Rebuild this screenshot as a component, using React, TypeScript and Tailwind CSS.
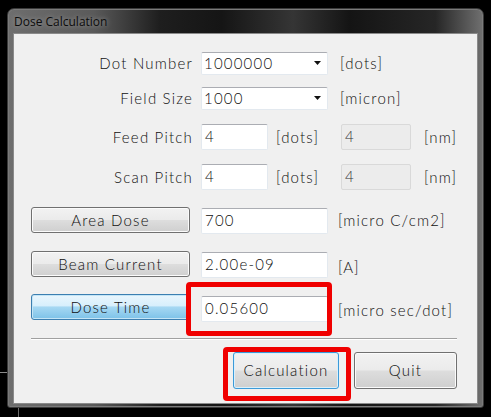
import React from 'react';

const font = { fontFamily: 'Lato, "Noto Sans", sans-serif' };

function Label({ children }: { children: React.ReactNode }) {
  return <div className="w-[170px] shrink-0 pr-[8px] text-right">{children}</div>;
}

function GrayButton({ children, className = '' }: { children: React.ReactNode; className?: string }) {
  return (
    <div
      className={`flex items-center justify-center rounded-[3px] border bg-[linear-gradient(to_bottom,#f2f2f2_0%,#ebebeb_48%,#dddddd_52%,#cfcfcf_100%)] ${className}`}
    >
      {children}
    </div>
  );
}

function ButtonCell({ children, blue = false }: { children: React.ReactNode; blue?: boolean }) {
  return (
    <div className="w-[170px] shrink-0">
      {blue ? (
        <div className="flex h-[26px] w-[159px] items-center justify-center rounded-[3px] border border-[#3c7fb1] bg-[linear-gradient(to_bottom,#eaf6fd_0%,#d7effc_45%,#a6d8f3_50%,#7dc2e8_100%)] shadow-[inset_0_0_0_1px_#c4e5f6]">
          {children}
        </div>
      ) : (
        <div className="flex h-[26px] w-[159px] items-center justify-center rounded-[3px] border border-[#707070] bg-[linear-gradient(to_bottom,#f2f2f2_0%,#ebebeb_48%,#dddddd_52%,#cfcfcf_100%)] shadow-[inset_0_0_0_1px_#fbfbfb]">
          {children}
        </div>
      )}
    </div>
  );
}

function TextBox({ value, w, disabled = false }: { value: string; w: string; disabled?: boolean }) {
  return (
    <div
      className={`flex h-[26px] items-center rounded-[2px] border px-[3px] pb-[2px] ${w} ${
        disabled
          ? 'border-[#d9d9d9] bg-[#ececec] text-[#333]'
          : 'border-[#e3e9ef] border-t-[#abadb3] bg-white'
      }`}
    >
      {value}
    </div>
  );
}

function Combo({ value }: { value: string }) {
  return (
    <div className="flex h-[23px] w-[127px] items-center justify-between rounded-[2px] border border-[#e3e9ef] border-t-[#abadb3] bg-white pb-[1px] pl-[2px] pr-[6px]">
      <span>{value}</span>
      <svg width="7" height="4" viewBox="0 0 7 4">
        <path d="M0 0h7L3.5 4z" fill="#111" />
      </svg>
    </div>
  );
}

export default function App() {
  return (
    <div className="relative h-[417px] w-[491px] overflow-hidden bg-black" style={font}>
      {/* stray desktop lines */}
      <div className="absolute left-0 top-[372px] h-px w-[7px] bg-[#8a8a8a]" />
      <div className="absolute left-[18px] top-[408px] h-[9px] w-px bg-[#6a6a6a]" />

      <div className="ml-[7px] mt-[8px] flex h-[400px] w-[477px] flex-col rounded-t-[7px] rounded-b-[3px] border border-[#3a3a3a] bg-[linear-gradient(to_right,#6e6e6e_0%,#5a5a5a_18%,#1e1e1e_32%,#151515_45%,#353535_60%,#141414_72%,#262626_90%,#707070_100%)] shadow-[inset_0_0_0_1px_#7a7a7a]">
        <div className="flex h-[24px] items-center pl-[6px] pt-[2px]">
          <span
            className="text-[12px] leading-none text-[#0c0c0c] [text-shadow:0_0_5px_#a8a8a8]"
            style={{ fontFamily: '"Open Sans", "Noto Sans", sans-serif' }}
          >
            Dose Calculation
          </span>
        </div>

        <div className="mx-[5px] mb-[3px] flex-1 border border-[#8a8a8a] bg-[#f0f0f0] text-[15px] font-light leading-none tracking-[1.2px] text-[#0f0f0f]">
          <div className="pl-[17px] pt-[18px]">
            {/* Dot Number */}
            <div className="flex h-[23px] items-center">
              <Label>Dot Number</Label>
              <Combo value="1000000" />
              <span className="ml-[12px]">[dots]</span>
            </div>

            {/* Field Size */}
            <div className="mt-[12px] flex h-[23px] items-center">
              <Label>Field Size</Label>
              <Combo value="1000" />
              <span className="ml-[12px]">[micron]</span>
            </div>

            {/* Feed Pitch */}
            <div className="mt-[14px] flex h-[26px] items-center">
              <Label>Feed Pitch</Label>
              <TextBox value="4" w="w-[67px]" />
              <span className="ml-[8px] w-[65px]">[dots]</span>
              <TextBox value="4" w="w-[70px]" disabled />
              <span className="ml-[13px]">[nm]</span>
            </div>

            {/* Scan Pitch */}
            <div className="mt-[14px] flex h-[26px] items-center">
              <Label>Scan Pitch</Label>
              <TextBox value="4" w="w-[67px]" />
              <span className="ml-[8px] w-[65px]">[dots]</span>
              <TextBox value="4" w="w-[70px]" disabled />
              <span className="ml-[13px]">[nm]</span>
            </div>

            {/* Area Dose */}
            <div className="mt-[17px] flex h-[27px] items-start">
              <ButtonCell>Area Dose</ButtonCell>
              <div className="mt-[1px]">
                <TextBox value="700" w="w-[127px]" />
              </div>
              <span className="ml-[10px] mt-[6px]">[micro C/cm2]</span>
            </div>

            {/* Beam Current */}
            <div className="mt-[17px] flex h-[27px] items-start">
              <ButtonCell>Beam Current</ButtonCell>
              <div className="mt-[1px]">
                <TextBox value="2.00e-09" w="w-[127px]" />
              </div>
              <span className="ml-[10px] mt-[9px]">[A]</span>
            </div>

            {/* Dose Time */}
            <div className="mt-[16px] flex h-[28px] items-start">
              <ButtonCell blue>Dose Time</ButtonCell>
              <div className="relative mt-[2px]">
                <TextBox value="0.05600" w="w-[127px]" />
                <div className="absolute -bottom-[14px] -left-[15px] -right-[4px] -top-[14px] rounded-[4px] border-[5px] border-[#f00000]" />
              </div>
              <span className="ml-[10px] mt-[9px]">[micro sec/dot]</span>
            </div>
          </div>

          {/* separator */}
          <div className="ml-[17px] mr-[20px] mt-[16px] h-[2px] border-t border-b border-t-[#a0a0a0] border-b-white" />

          <div className="mt-[12px] flex pl-[219px]">
            <div className="relative">
              <GrayButton className="h-[37px] w-[106px] border-[#3c9ad8] shadow-[inset_0_0_0_1px_#d9f0fc]">
                Calculation
              </GrayButton>
              <div className="absolute -bottom-[12px] -left-[10px] -right-[12px] -top-[5px] rounded-[4px] border-[5px] border-[#f00000]" />
            </div>
            <GrayButton className="ml-[15px] h-[37px] w-[103px] border-[#707070] shadow-[inset_0_0_0_1px_#fbfbfb]">
              Quit
            </GrayButton>
          </div>
        </div>
      </div>
    </div>
  );
}
